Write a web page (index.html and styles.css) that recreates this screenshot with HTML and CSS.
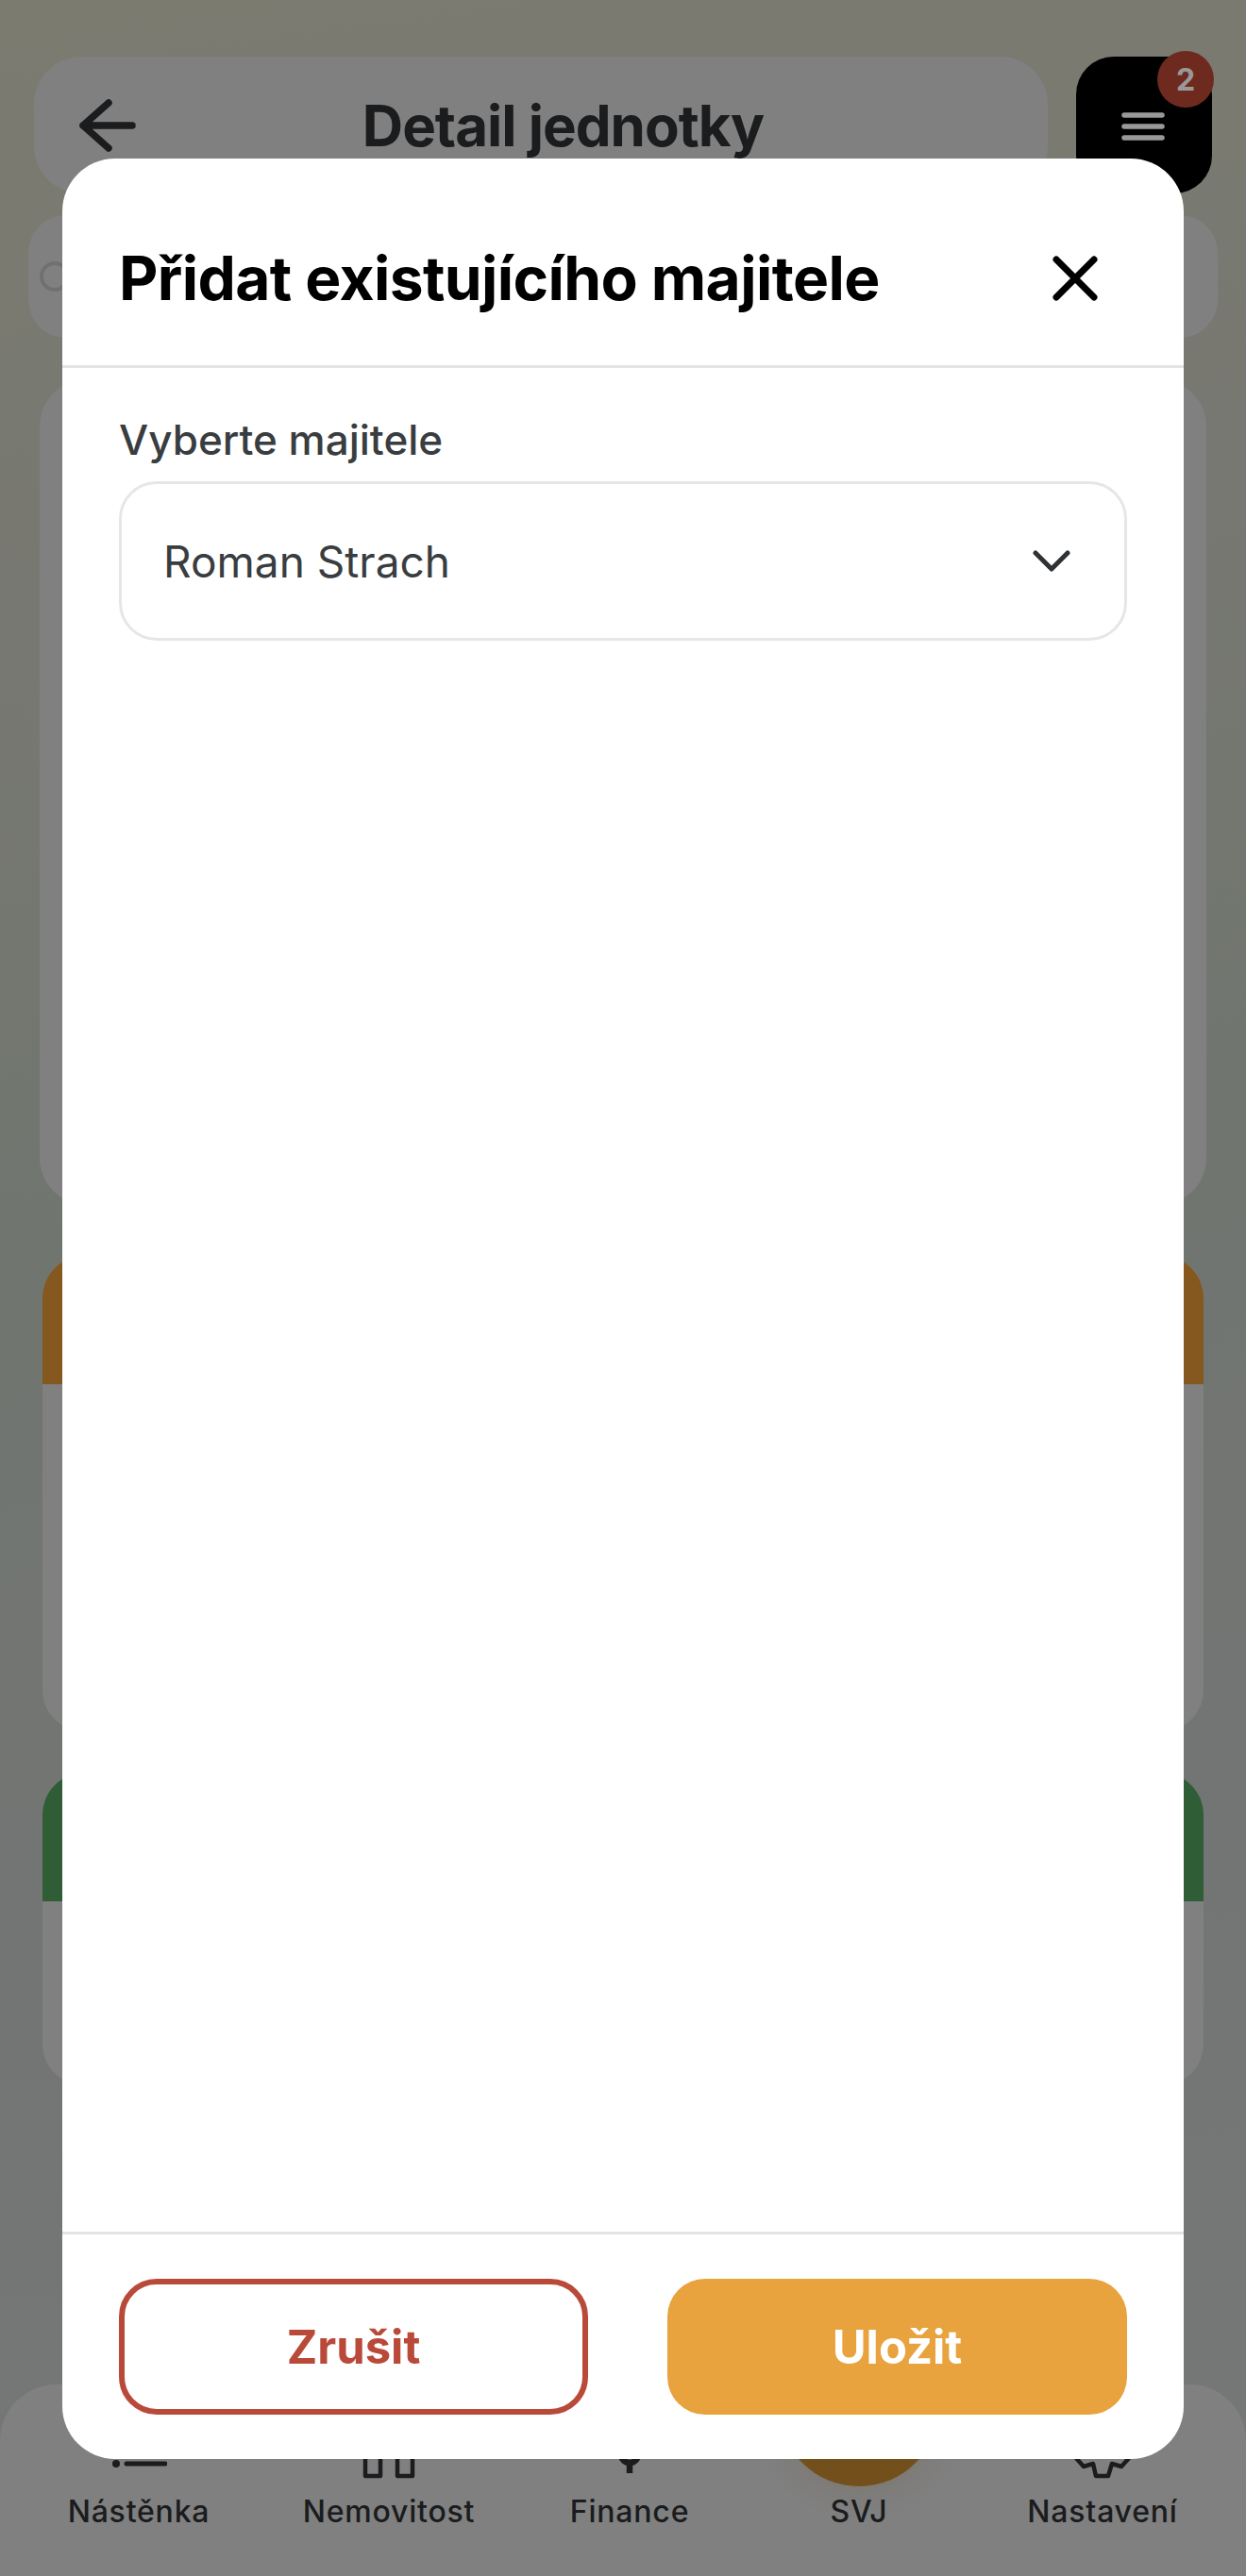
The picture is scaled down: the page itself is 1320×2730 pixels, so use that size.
FILE: index.html
```html
<!DOCTYPE html>
<html lang="cs">
<head>
    <meta charset="UTF-8">
    <meta name="viewport" content="width=device-width, initial-scale=1.0">
    <title>Detail jednotky</title>
    <link rel="stylesheet" href="styles.css">
</head>
<body>
    <div class="page">
        <div class="top-row">
            <div class="header-bar">
                <svg class="back-icon" viewBox="0 0 60 56" fill="none" stroke="#2c2f32" stroke-width="7.5" stroke-linecap="round" stroke-linejoin="round">
                    <path d="M31 4 L4 28 L31 52 M4 28 H56"/>
                </svg>
                <span class="header-title">Detail jednotky</span>
            </div>
            <div class="menu-button">
                <svg class="menu-icon" viewBox="0 0 46 32" fill="none" stroke="#fff" stroke-width="5.5" stroke-linecap="round">
                    <path d="M3 4 H43 M3 16 H43 M3 28 H43"/>
                </svg>
                <span class="badge">2</span>
            </div>
        </div>

        <div class="search-card">
            <span class="search-circle"></span>
        </div>
        <div class="info-card"></div>
        <div class="section-card section-orange"><div class="section-head"></div></div>
        <div class="section-card section-green"><div class="section-head"></div></div>

        <nav class="bottom-nav">
            <div class="nav-item">
                <svg class="nav-icon" viewBox="0 0 60 60" fill="none" stroke="#2c2f32" stroke-width="5" stroke-linecap="round">
                    <circle cx="6" cy="44" r="4" fill="#2c2f32" stroke="none"/>
                    <path d="M17 44 H58"/>
                </svg>
                <span>Nástěnka</span>
            </div>
            <div class="nav-item">
                <svg class="nav-icon" viewBox="0 0 60 60" fill="none" stroke="#2c2f32" stroke-width="4.5" stroke-linejoin="round">
                    <path d="M5 20 V57 H21 V20 M39 20 V57 H55 V20"/>
                </svg>
                <span>Nemovitost</span>
            </div>
            <div class="nav-item">
                <svg class="nav-icon" viewBox="0 0 60 60" fill="none" stroke="#2c2f32" stroke-width="6.5">
                    <circle cx="30" cy="34" r="9"/>
                    <path d="M30 43 V54"/>
                </svg>
                <span>Finance</span>
            </div>
            <div class="nav-item nav-active">
                <span class="nav-bubble"></span>
                <div class="nav-icon"></div>
                <span class="nav-text">SVJ</span>
            </div>
            <div class="nav-item">
                <svg class="nav-icon" viewBox="0 0 60 60" fill="none" stroke="#2c2f32" stroke-width="4.5" stroke-linejoin="round" stroke-linecap="round">
                    <path d="M2 38 L10 47 L20 44 L23 57 H36 L40 44 L50 47 L58 38"/>
                </svg>
                <span>Nastavení</span>
            </div>
        </nav>
    </div>

    <div class="scrim"></div>

    <div class="modal">
        <div class="modal-header">
            <h2>Přidat existujícího majitele</h2>
            <svg class="close-icon" viewBox="0 0 48 48" fill="none" stroke="#000" stroke-width="7" stroke-linecap="round">
                <path d="M4 4 L44 44 M44 4 L4 44"/>
            </svg>
        </div>
        <div class="modal-body">
            <label class="field-label">Vyberte majitele</label>
            <div class="select-box">
                <span>Roman Strach</span>
                <svg class="chevron" viewBox="0 0 40 24" fill="none" stroke="#2f3235" stroke-width="5" stroke-linecap="round" stroke-linejoin="round">
                    <path d="M3 3 L20 20 L37 3"/>
                </svg>
            </div>
        </div>
        <div class="modal-footer">
            <button class="btn btn-cancel">Zrušit</button>
            <button class="btn btn-save">Uložit</button>
        </div>
    </div>
</body>
</html>
```

FILE: styles.css
```css
* {
    box-sizing: border-box;
}
body {
    margin: 0;
    padding: 0;
    font-family: Inter, "Noto Sans", sans-serif;
    width: 1320px;
    height: 2730px;
    position: relative;
    overflow: hidden;
}
.page {
    height: 2730px;
    display: flex;
    flex-direction: column;
    background: linear-gradient(172deg, #cecdbb 0%, #c6c8bc 25%, #bcc4ba 45%, #c0c4c2 75%, #c6c7c8 100%);
}
.top-row {
    display: flex;
    margin: 60px 36px 0;
    gap: 30px;
}
.header-bar {
    width: 1074px;
    height: 145px;
    background-color: #d5d5d5;
    border-radius: 50px;
    position: relative;
    display: flex;
    align-items: center;
    justify-content: center;
}
.back-icon {
    position: absolute;
    left: 48px;
    top: 45px;
    width: 60px;
    height: 56px;
}
.header-title {
    font-size: 60px;
    font-weight: 700;
    letter-spacing: -1px;
    color: #2c2f32;
    margin-left: 47px;
}
.menu-button {
    width: 144px;
    height: 145px;
    background-color: #000;
    border-radius: 40px;
    position: relative;
}
.menu-icon {
    position: absolute;
    left: 48px;
    top: 58px;
    width: 46px;
    height: 32px;
}
.badge {
    position: absolute;
    top: -6px;
    right: -2px;
    width: 60px;
    height: 60px;
    border-radius: 50%;
    background-color: #b94636;
    color: #fff;
    font-size: 32px;
    font-weight: 700;
    display: flex;
    align-items: center;
    justify-content: center;
}
.search-card {
    margin: 23px 30px 0;
    height: 130px;
    background-color: #d5d5d5;
    border-radius: 40px;
    padding: 49px 0 0 12px;
}
.search-circle {
    display: block;
    width: 32px;
    height: 32px;
    border: 4px solid #bbb;
    border-radius: 50%;
}
.info-card {
    margin: 44px 42px 0;
    height: 875px;
    background-color: #d5d5d5;
    border-radius: 50px;
}
.section-card {
    margin: 0 45px;
    background-color: #d5d5d5;
    border-radius: 44px;
    overflow: hidden;
}
.section-head {
    height: 136px;
}
.section-orange {
    margin-top: 54px;
    height: 504px;
}
.section-orange .section-head {
    background-color: #de9334;
}
.section-green {
    margin-top: 44px;
    height: 331px;
}
.section-green .section-head {
    background-color: #4e9b5a;
}
.bottom-nav {
    margin-top: auto;
    height: 203px;
    background-color: #d5d5d5;
    border-radius: 60px 60px 0 0;
    padding: 40px 13px 0 15px;
    display: grid;
    grid-template-columns: 264px 266px 244px 242px 274px;
}
.nav-item {
    display: flex;
    flex-direction: column;
    align-items: center;
    font-size: 32px;
    font-weight: 500;
    letter-spacing: 0.8px;
    color: #2c2f32;
    position: relative;
}
.nav-icon {
    width: 60px;
    height: 60px;
    margin-bottom: 13px;
}
.nav-item span {
    line-height: 44px;
}
.nav-bubble {
    position: absolute;
    left: 36px;
    top: -102px;
    width: 170px;
    height: 170px;
    border-radius: 50%;
    background-color: #c08430;
    box-shadow: 0 6px 30px rgba(192, 132, 48, 0.15);
}
.nav-text {
    position: relative;
}
.scrim {
    position: absolute;
    inset: 0;
    background-color: rgba(0, 0, 0, 0.4);
}
.modal {
    position: absolute;
    left: 66px;
    top: 168px;
    width: 1188px;
    height: 2438px;
    background-color: #fff;
    border-radius: 56px;
    display: flex;
    flex-direction: column;
}
.modal-header {
    height: 222px;
    border-bottom: 3px solid #e2e3e4;
    padding: 34px 91px 0 60px;
    display: flex;
    align-items: center;
    justify-content: space-between;
}
.modal-header h2 {
    margin: 0;
    font-size: 64px;
    font-weight: 700;
    letter-spacing: -0.6px;
    color: #000;
}
.close-icon {
    width: 48px;
    height: 48px;
}
.modal-body {
    flex: 1;
    padding: 50px 60px 0;
}
.field-label {
    display: block;
    font-size: 44px;
    font-weight: 500;
    line-height: 52px;
    color: #393d40;
    margin-bottom: 18px;
}
.select-box {
    height: 169px;
    border: 3px solid #e5e6e7;
    border-radius: 40px;
    padding: 0 57px 0 44px;
    display: flex;
    align-items: center;
    justify-content: space-between;
    font-size: 46px;
    color: #393d40;
}
.chevron {
    width: 40px;
    height: 24px;
}
.modal-footer {
    height: 241px;
    border-top: 3px solid #e2e3e4;
    padding: 47px 60px 0;
    display: flex;
    justify-content: space-between;
}
.btn {
    height: 144px;
    border-radius: 40px;
    font-family: inherit;
    font-size: 49px;
    font-weight: 700;
    cursor: pointer;
}
.btn-cancel {
    width: 497px;
    background-color: #fff;
    border: 6px solid #b94a3a;
    color: #b94a3a;
}
.btn-save {
    width: 487px;
    background-color: #e8a23e;
    border: none;
    color: #fff;
}
```
